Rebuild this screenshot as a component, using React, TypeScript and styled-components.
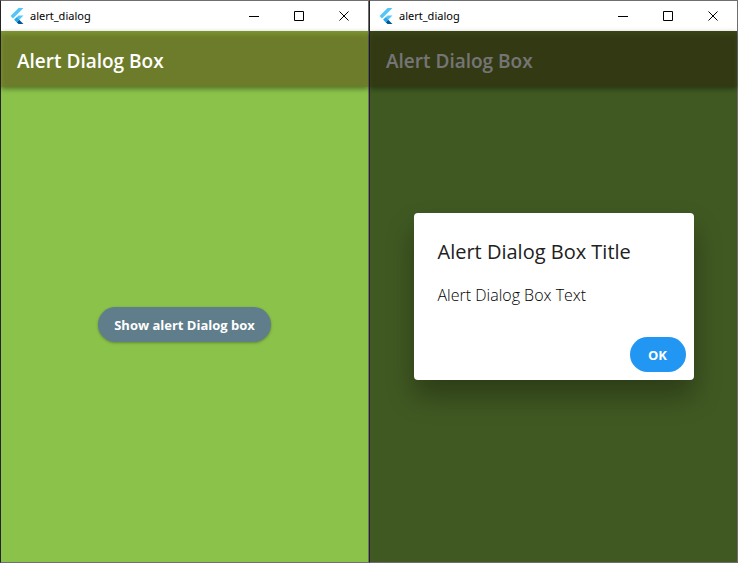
import React from "react";
import styled, { createGlobalStyle } from "styled-components";

const GlobalStyle = createGlobalStyle`
  * { box-sizing: border-box; }
  body { margin: 0; background: #252326; font-family: "Open Sans", "Noto Sans", sans-serif; }
  h1, h2, p { margin: 0; }
  button { font-family: inherit; border: 0; padding: 0; }
`;

const Desktop = styled.main`
  display: grid;
  grid-template-columns: 1fr 1fr;
  min-height: 100vh;
`;

const Window = styled.section`
  display: flex;
  flex-direction: column;
  border: 1px solid #6f6f6f;
  border-left-color: #252326;
`;

const TitleBar = styled.header`
  display: flex;
  align-items: center;
  height: 30px;
  padding: 0 2px 0 8px;
  background: #fff;
`;

const WindowTitle = styled.span`
  flex: 1;
  margin-left: 5px;
  color: #000;
  font-size: 11px;
  line-height: 16px;
  font-family: "Noto Sans", sans-serif;
`;

const CaptionButton = styled.button`
  display: grid;
  place-items: center;
  width: 45px;
  height: 30px;
  background: transparent;
  color: #000;
`;

const Client = styled.div`
  position: relative;
  flex: 1;
  display: flex;
  flex-direction: column;
  background: #8bc34a;
`;

const AppBar = styled.div`
  display: flex;
  align-items: center;
  height: 56px;
  padding: 4px 16px 0;
  background: #6d7c2a;
  box-shadow: 0 2px 5px rgba(0, 0, 0, 0.4), inset 0 3px 5px rgba(139, 170, 54, 0.6);
`;

const AppTitle = styled.h1`
  color: #fff;
  font-size: 19px;
  line-height: 24px;
  font-weight: 600;
`;

const Body = styled.div`
  flex: 1;
  display: grid;
  place-items: center;
`;

const PillButton = styled.button<{ $tone: string; $raised?: boolean }>`
  height: 35px;
  padding: 0 16px;
  border-radius: 18px;
  background: ${(p) => p.$tone};
  color: #fff;
  font-size: 13px;
  line-height: 20px;
  font-weight: 700;
  box-shadow: ${(p) => (p.$raised ? "0 1px 3px rgba(0, 0, 0, 0.3)" : "none")};
`;

const OkButton = styled(PillButton)`
  width: 56px;
`;

const Barrier = styled.div`
  position: absolute;
  inset: 0;
  display: grid;
  place-items: center;
  background: rgba(0, 0, 0, 0.54);
`;

const Dialog = styled.div`
  width: 280px;
  border-radius: 4px;
  background: #fff;
  box-shadow: 0 16px 28px rgba(0, 0, 0, 0.32);
`;

const DialogTitle = styled.h2`
  padding: 26px 24px 0;
  color: #212121;
  font-size: 20px;
  line-height: 26px;
  font-weight: 500;
`;

const DialogText = styled.p`
  padding: 19px 24px 31px;
  color: #000;
  font-size: 16px;
  line-height: 22px;
  font-weight: 300;
`;

const DialogActions = styled.div`
  display: flex;
  justify-content: flex-end;
  padding: 0 8px 8px;
`;

function FlutterLogo() {
  return (
    <svg width="16" height="16" viewBox="0 0 24 24" aria-hidden="true">
      <path d="M14.3 0 2.3 12 6 15.7 21.7 0z" fill="#54c5f8" />
      <path d="M14.3 11.1 7.9 17.5l3.7 3.7 10.1-10.1z" fill="#54c5f8" />
      <path d="m11.6 21.2 2.7 2.8h7.4l-6.4-6.5z" fill="#01579b" />
      <path d="m7.9 17.5 3.7-3.7 3.7 3.7-3.7 3.7z" fill="#29a7e8" />
    </svg>
  );
}

const glyphs = [
  { label: "Minimize", d: "M0 5.5h10" },
  { label: "Maximize", d: "M.5.5h9v9h-9z" },
  { label: "Close", d: "m.5.5 9 9m0-9-9 9" },
];

function AppWindow({ action, children }: { action?: string; children?: React.ReactNode }) {
  return (
    <Window>
      <TitleBar>
        <FlutterLogo />
        <WindowTitle>alert_dialog</WindowTitle>
        {glyphs.map((g) => (
          <CaptionButton key={g.label} type="button" aria-label={g.label}>
            <svg width="10" height="10" viewBox="0 0 10 10" fill="none" stroke="currentColor">
              <path d={g.d} />
            </svg>
          </CaptionButton>
        ))}
      </TitleBar>
      <Client>
        <AppBar>
          <AppTitle>Alert Dialog Box</AppTitle>
        </AppBar>
        <Body>
          {action && (
            <PillButton type="button" $tone="#607d8b" $raised>
              {action}
            </PillButton>
          )}
        </Body>
        {children}
      </Client>
    </Window>
  );
}

export default function App() {
  return (
    <>
      <GlobalStyle />
      <Desktop>
        <AppWindow action="Show alert Dialog box" />
        <AppWindow>
          <Barrier>
            <Dialog role="dialog" aria-modal="true" aria-labelledby="dialog-title">
              <DialogTitle id="dialog-title">Alert Dialog Box Title</DialogTitle>
              <DialogText>Alert Dialog Box Text</DialogText>
              <DialogActions>
                <OkButton type="button" $tone="#2196f3">
                  OK
                </OkButton>
              </DialogActions>
            </Dialog>
          </Barrier>
        </AppWindow>
      </Desktop>
    </>
  );
}
